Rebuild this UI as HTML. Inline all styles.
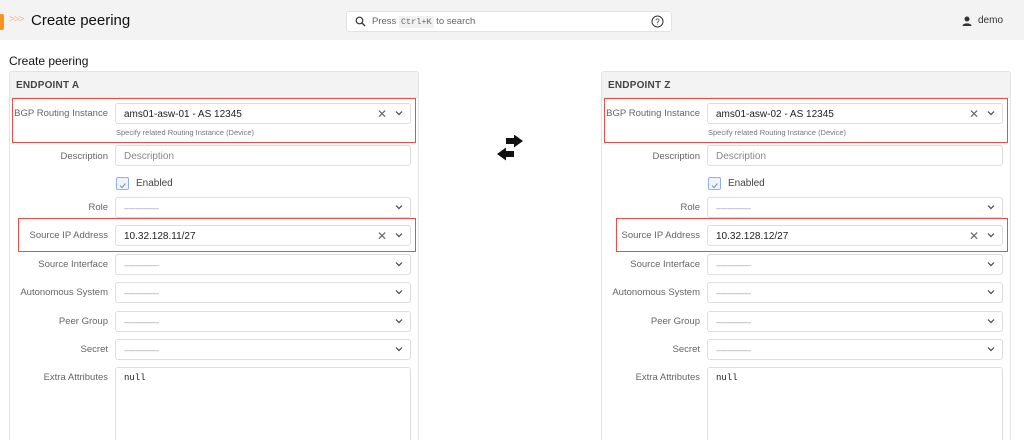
<!DOCTYPE html>
<html style="overflow:hidden;height:441px"><head><meta charset="utf-8"><style>
*{box-sizing:border-box;margin:0;padding:0}
body{width:1024px;height:441px;overflow:hidden;background:#fff;font-family:"Liberation Sans",sans-serif;position:relative;color:#333}
.hdr{position:absolute;left:0;top:0;width:1024px;height:40px;background:#f3f3f3}
.abs{position:absolute}
.card{position:absolute;top:71px;width:410px;height:369px;border:1px solid #e3e3e3;border-bottom:none;border-radius:3px 3px 0 0;background:#fff;overflow:hidden}
.ch{position:absolute;left:0;top:0;width:100%;height:26px;background:#f3f3f3;border-bottom:1px solid #e6e6e6;font-size:10px;font-weight:bold;color:#444;padding:8px 0 0 6px;letter-spacing:.2px}
.lbl{position:absolute;right:310px;font-size:9.5px;color:#666;white-space:nowrap;text-align:right}
.inp{position:absolute;left:105px;width:296px;height:21px;border:1px solid #ddd;border-radius:3px;font-size:10px;color:#222;padding:5px 8px;white-space:nowrap}
.ph{color:#888}
.dash{color:#999;font-size:8px;letter-spacing:-.5px}
.chev{position:absolute;right:7px;top:6px;width:8px;height:6px}
.x{position:absolute;right:23px;top:3px;font-size:12px;color:#666}
.red{position:absolute;border:1px solid #ef4b4b}
.help{position:absolute;left:106px;font-size:7.5px;color:#777}
.cb{position:absolute;left:106px;width:13px;height:13px;border:1px solid #8fb2e8;border-radius:2px;background:#eef4fd}
</style></head><body>
<div class="hdr"></div>
<div class="abs" style="left:0;top:14px;width:4px;height:16px;background:#f7941d;border-radius:0 2px 2px 0"></div>
<div class="abs" style="left:9px;top:14px;font-size:10px;color:#f9b98a;letter-spacing:-1px">&gt;&gt;&gt;</div>
<div class="abs" style="left:31px;top:12px;font-size:15px;color:#111">Create peering</div>
<div class="abs" style="left:346px;top:11px;width:326px;height:21px;background:#fff;border:1px solid #e2e2e2;border-radius:3px"></div>
<svg class="abs" style="left:355px;top:16px" width="11" height="11" viewBox="0 0 11 11"><circle cx="4.5" cy="4.5" r="3.3" fill="none" stroke="#333" stroke-width="1.2"/><path d="M7 7L10 10" stroke="#333" stroke-width="1.3"/></svg>
<div class="abs" style="left:372px;top:16px;font-size:9.5px;color:#666">Press <span style="font-family:'Liberation Mono',monospace;font-size:8.5px;background:#f1f1f1;padding:1px 2px">Ctrl+K</span> to search</div>
<svg class="abs" style="left:651px;top:15px" width="13" height="13" viewBox="0 0 13 13"><circle cx="6.5" cy="6.5" r="5.5" fill="none" stroke="#333" stroke-width="1"/><text x="6.5" y="9.5" font-size="8" text-anchor="middle" fill="#333" font-family="Liberation Sans">?</text></svg>
<svg class="abs" style="left:962px;top:16px" width="10" height="10" viewBox="0 0 10 10"><circle cx="5" cy="3" r="2.5" fill="#333"/><path d="M0.5 10C0.5 6.5 9.5 6.5 9.5 10Z" fill="#333"/></svg>
<div class="abs" style="left:978px;top:15px;font-size:10px;color:#333">demo</div>
<div class="abs" style="left:9px;top:54px;font-size:12px;color:#111">Create peering</div>

<svg class="abs" style="left:496px;top:135px" width="28" height="26" viewBox="0 0 28 26"><path d="M10 3H18V-0.5L27 6L18 12.5V9H10Z" fill="#111"/><path d="M18 16H10V12.5L1 19L10 25.5V22H18Z" fill="#111"/></svg>

<!-- CARD A -->
<div class="card" style="left:9px">
<div class="ch">ENDPOINT A</div>
<div class="red" style="left:2px;top:26px;width:404px;height:45px"></div>
<div class="lbl" style="top:36px">BGP Routing Instance</div>
<div class="inp" style="top:31px">ams01-asw-01 - AS 12345<span class="x">✕</span><svg class="chev" viewBox="0 0 8 6"><path d="M1 1.5L4 4.5L7 1.5" fill="none" stroke="#444" stroke-width="1.2"/></svg></div>
<div class="help" style="top:56px">Specify related Routing Instance (Device)</div>
<div class="lbl" style="top:79px">Description</div>
<div class="inp ph" style="top:73px">Description</div>
<div class="cb" style="top:105px"><svg width="11" height="11" viewBox="0 0 11 11"><path d="M3 5.5L5 7.5L8.5 3.5" fill="none" stroke="#6a95d8" stroke-width="1"/></svg></div>
<div class="abs" style="left:126px;top:106px;font-size:10px;color:#444">Enabled</div>
<div class="lbl" style="top:130px">Role</div>
<div class="inp" style="top:125px"><span class="dash">----------------</span><svg class="chev" viewBox="0 0 8 6"><path d="M1 1.5L4 4.5L7 1.5" fill="none" stroke="#444" stroke-width="1.2"/></svg></div>
<div class="red" style="left:8px;top:146px;width:398px;height:34px"></div>
<div class="lbl" style="top:158px">Source IP Address</div>
<div class="inp" style="top:153px">10.32.128.11/27<span class="x">✕</span><svg class="chev" viewBox="0 0 8 6"><path d="M1 1.5L4 4.5L7 1.5" fill="none" stroke="#444" stroke-width="1.2"/></svg></div>
<div class="lbl" style="top:187px">Source Interface</div>
<div class="inp" style="top:182px"><span class="dash">----------------</span><svg class="chev" viewBox="0 0 8 6"><path d="M1 1.5L4 4.5L7 1.5" fill="none" stroke="#444" stroke-width="1.2"/></svg></div>
<div class="lbl" style="top:215px">Autonomous System</div>
<div class="inp" style="top:210px"><span class="dash">----------------</span><svg class="chev" viewBox="0 0 8 6"><path d="M1 1.5L4 4.5L7 1.5" fill="none" stroke="#444" stroke-width="1.2"/></svg></div>
<div class="lbl" style="top:244px">Peer Group</div>
<div class="inp" style="top:239px"><span class="dash">----------------</span><svg class="chev" viewBox="0 0 8 6"><path d="M1 1.5L4 4.5L7 1.5" fill="none" stroke="#444" stroke-width="1.2"/></svg></div>
<div class="lbl" style="top:272px">Secret</div>
<div class="inp" style="top:267px"><span class="dash">----------------</span><svg class="chev" viewBox="0 0 8 6"><path d="M1 1.5L4 4.5L7 1.5" fill="none" stroke="#444" stroke-width="1.2"/></svg></div>
<div class="lbl" style="top:300px">Extra Attributes</div>
<div class="inp" style="top:295px;height:90px;font-family:'Liberation Mono',monospace;font-size:9px">null</div>
</div>

<!-- CARD Z -->
<div class="card" style="left:601px">
<div class="ch">ENDPOINT Z</div>
<div class="red" style="left:2px;top:26px;width:404px;height:45px"></div>
<div class="lbl" style="top:36px">BGP Routing Instance</div>
<div class="inp" style="top:31px">ams01-asw-02 - AS 12345<span class="x">✕</span><svg class="chev" viewBox="0 0 8 6"><path d="M1 1.5L4 4.5L7 1.5" fill="none" stroke="#444" stroke-width="1.2"/></svg></div>
<div class="help" style="top:56px">Specify related Routing Instance (Device)</div>
<div class="lbl" style="top:79px">Description</div>
<div class="inp ph" style="top:73px">Description</div>
<div class="cb" style="top:105px"><svg width="11" height="11" viewBox="0 0 11 11"><path d="M3 5.5L5 7.5L8.5 3.5" fill="none" stroke="#6a95d8" stroke-width="1"/></svg></div>
<div class="abs" style="left:126px;top:106px;font-size:10px;color:#444">Enabled</div>
<div class="lbl" style="top:130px">Role</div>
<div class="inp" style="top:125px"><span class="dash">----------------</span><svg class="chev" viewBox="0 0 8 6"><path d="M1 1.5L4 4.5L7 1.5" fill="none" stroke="#444" stroke-width="1.2"/></svg></div>
<div class="red" style="left:14px;top:146px;width:392px;height:34px"></div>
<div class="lbl" style="top:158px">Source IP Address</div>
<div class="inp" style="top:153px">10.32.128.12/27<span class="x">✕</span><svg class="chev" viewBox="0 0 8 6"><path d="M1 1.5L4 4.5L7 1.5" fill="none" stroke="#444" stroke-width="1.2"/></svg></div>
<div class="lbl" style="top:187px">Source Interface</div>
<div class="inp" style="top:182px"><span class="dash">----------------</span><svg class="chev" viewBox="0 0 8 6"><path d="M1 1.5L4 4.5L7 1.5" fill="none" stroke="#444" stroke-width="1.2"/></svg></div>
<div class="lbl" style="top:215px">Autonomous System</div>
<div class="inp" style="top:210px"><span class="dash">----------------</span><svg class="chev" viewBox="0 0 8 6"><path d="M1 1.5L4 4.5L7 1.5" fill="none" stroke="#444" stroke-width="1.2"/></svg></div>
<div class="lbl" style="top:244px">Peer Group</div>
<div class="inp" style="top:239px"><span class="dash">----------------</span><svg class="chev" viewBox="0 0 8 6"><path d="M1 1.5L4 4.5L7 1.5" fill="none" stroke="#444" stroke-width="1.2"/></svg></div>
<div class="lbl" style="top:272px">Secret</div>
<div class="inp" style="top:267px"><span class="dash">----------------</span><svg class="chev" viewBox="0 0 8 6"><path d="M1 1.5L4 4.5L7 1.5" fill="none" stroke="#444" stroke-width="1.2"/></svg></div>
<div class="lbl" style="top:300px">Extra Attributes</div>
<div class="inp" style="top:295px;height:90px;font-family:'Liberation Mono',monospace;font-size:9px">null</div>
</div>
</body></html>
